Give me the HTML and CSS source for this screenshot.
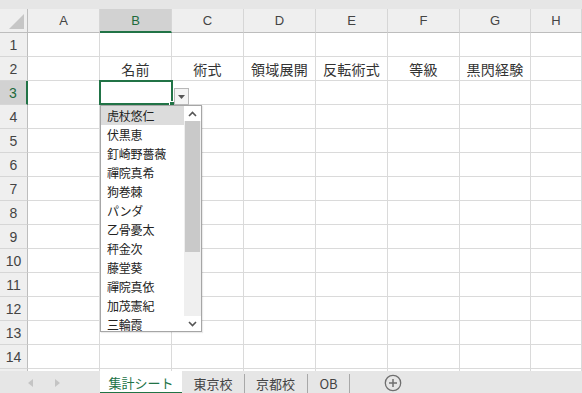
FILE: index.html
```html
<!DOCTYPE html>
<html lang="ja">
<head>
<meta charset="utf-8">
<link rel="stylesheet" href="styles.css">
</head>
<body>
<div class="app">
  <div class="topstrip"></div>
  <div class="sheet">
    <div class="grid">
      <div class="corner"><span class="tri"></span></div>
      <div class="ch">A</div><div class="ch sel">B</div><div class="ch">C</div><div class="ch">D</div><div class="ch">E</div><div class="ch">F</div><div class="ch">G</div><div class="ch">H</div>

      <div class="rh">1</div><div class="c"></div><div class="c"></div><div class="c"></div><div class="c"></div><div class="c"></div><div class="c"></div><div class="c"></div><div class="c"></div>
      <div class="rh">2</div><div class="c"></div><div class="c">名前</div><div class="c">術式</div><div class="c">領域展開</div><div class="c">反転術式</div><div class="c">等級</div><div class="c">黒閃経験</div><div class="c"></div>
      <div class="rh sel">3</div><div class="c"></div><div class="c"></div><div class="c"></div><div class="c"></div><div class="c"></div><div class="c"></div><div class="c"></div><div class="c"></div>
      <div class="rh">4</div><div class="c"></div><div class="c"></div><div class="c"></div><div class="c"></div><div class="c"></div><div class="c"></div><div class="c"></div><div class="c"></div>
      <div class="rh">5</div><div class="c"></div><div class="c"></div><div class="c"></div><div class="c"></div><div class="c"></div><div class="c"></div><div class="c"></div><div class="c"></div>
      <div class="rh">6</div><div class="c"></div><div class="c"></div><div class="c"></div><div class="c"></div><div class="c"></div><div class="c"></div><div class="c"></div><div class="c"></div>
      <div class="rh">7</div><div class="c"></div><div class="c"></div><div class="c"></div><div class="c"></div><div class="c"></div><div class="c"></div><div class="c"></div><div class="c"></div>
      <div class="rh">8</div><div class="c"></div><div class="c"></div><div class="c"></div><div class="c"></div><div class="c"></div><div class="c"></div><div class="c"></div><div class="c"></div>
      <div class="rh">9</div><div class="c"></div><div class="c"></div><div class="c"></div><div class="c"></div><div class="c"></div><div class="c"></div><div class="c"></div><div class="c"></div>
      <div class="rh">10</div><div class="c"></div><div class="c"></div><div class="c"></div><div class="c"></div><div class="c"></div><div class="c"></div><div class="c"></div><div class="c"></div>
      <div class="rh">11</div><div class="c"></div><div class="c"></div><div class="c"></div><div class="c"></div><div class="c"></div><div class="c"></div><div class="c"></div><div class="c"></div>
      <div class="rh">12</div><div class="c"></div><div class="c"></div><div class="c"></div><div class="c"></div><div class="c"></div><div class="c"></div><div class="c"></div><div class="c"></div>
      <div class="rh">13</div><div class="c"></div><div class="c"></div><div class="c"></div><div class="c"></div><div class="c"></div><div class="c"></div><div class="c"></div><div class="c"></div>
      <div class="rh">14</div><div class="c"></div><div class="c"></div><div class="c"></div><div class="c"></div><div class="c"></div><div class="c"></div><div class="c"></div><div class="c"></div>
      <div class="rh"></div><div class="c"></div><div class="c"></div><div class="c"></div><div class="c"></div><div class="c"></div><div class="c"></div><div class="c"></div><div class="c"></div>
    </div>

    <div class="active-cell"><span class="handle"></span></div>
    <div class="dd-btn"><svg width="7" height="4" viewBox="0 0 7 4"><path d="M0 0H7L3.5 4Z" fill="#555"/></svg></div>

    <div class="dd-list">
      <ul class="items">
        <li class="hl">虎杖悠仁</li>
        <li>伏黒恵</li>
        <li>釘崎野薔薇</li>
        <li>禪院真希</li>
        <li>狗巻棘</li>
        <li>パンダ</li>
        <li>乙骨憂太</li>
        <li>秤金次</li>
        <li>藤堂葵</li>
        <li>禪院真依</li>
        <li>加茂憲紀</li>
        <li>三輪霞</li>
      </ul>
      <div class="scroll">
        <div class="sb-btn"><svg width="9" height="6" viewBox="0 0 9 6"><path d="M1 5L4.5 1.5L8 5" fill="none" stroke="#555" stroke-width="1.6"/></svg></div>
        <div class="track"><div class="thumb"></div></div>
        <div class="sb-btn"><svg width="9" height="6" viewBox="0 0 9 6"><path d="M1 1L4.5 4.5L8 1" fill="none" stroke="#555" stroke-width="1.6"/></svg></div>
      </div>
    </div>
  </div>

  <div class="tabs">
    <div class="nav">
      <svg width="5" height="8" viewBox="0 0 5 8"><path d="M5 0V8L0 4Z" fill="#c4c4c4"/></svg>
      <svg width="5" height="8" viewBox="0 0 5 8"><path d="M0 0V8L5 4Z" fill="#c4c4c4"/></svg>
    </div>
    <div class="tab active">集計シート</div>
    <div class="tab w62">東京校</div>
    <div class="tab w63">京都校</div>
    <div class="tab w43 last">OB</div>
    <div class="add">
      <svg width="18" height="18" viewBox="0 0 18 18"><circle cx="9" cy="9" r="7.7" fill="none" stroke="#6f6f6f" stroke-width="1.3"/><path d="M9 5V13M5 9H13" stroke="#6f6f6f" stroke-width="1.5"/></svg>
    </div>
  </div>
</div>
</body>
</html>
```

FILE: styles.css
```css
* { box-sizing: border-box; }
html, body { margin: 0; padding: 0; }
body {
  width: 582px;
  height: 393px;
  overflow: hidden;
  background: #e6e6e6;
  font-family: "Noto Sans CJK JP", "Noto Sans", sans-serif;
}
.app {
  display: flex;
  flex-direction: column;
  height: 393px;
}
.topstrip {
  height: 9px;
  background: #e6e6e6;
  flex: none;
}
.sheet {
  position: relative;
  height: 362px;
  overflow: hidden;
  flex: none;
  background: #fff;
}
.grid {
  display: grid;
  grid-template-columns: 28px repeat(6, 72px) 71px 51px;
  grid-auto-rows: 24px;
}
.corner {
  position: relative;
  background: #efefef;
  border-right: 1px solid #bdbdbd;
  border-bottom: 1px solid #bdbdbd;
}
.tri {
  position: absolute;
  right: 3px;
  bottom: 3px;
  width: 0;
  height: 0;
  border-left: 15px solid transparent;
  border-bottom: 15px solid #c6c6c6;
}
.ch {
  background: #efefef;
  border-right: 1px solid #d6d6d6;
  border-bottom: 1px solid #bdbdbd;
  font-family: "Liberation Sans", "Noto Sans", sans-serif;
  font-size: 13px;
  color: #444;
  display: flex;
  align-items: center;
  justify-content: center;
}
.ch.sel {
  background: #d2d2d2;
  color: #1e6b3c;
  border-bottom: 2px solid #217346;
}
.rh {
  background: #efefef;
  border-right: 1px solid #bdbdbd;
  border-bottom: 1px solid #d6d6d6;
  font-family: "Liberation Sans", "Noto Sans", sans-serif;
  font-size: 14px;
  color: #444;
  display: flex;
  align-items: center;
  justify-content: center;
}
.rh.sel {
  background: #d2d2d2;
  color: #1e6b3c;
  border-right: 2px solid #217346;
}
.c {
  border-right: 1px solid #dadada;
  border-bottom: 1px solid #dadada;
  font-size: 14px;
  color: #333;
  display: flex;
  align-items: center;
  justify-content: center;
  white-space: nowrap;
  letter-spacing: 0.3px;
}
.active-cell {
  position: absolute;
  left: 99px;
  top: 71px;
  width: 74px;
  height: 25px;
  border: 2px solid #217346;
}
.handle {
  position: absolute;
  right: -4px;
  bottom: -4px;
  width: 6px;
  height: 6px;
  background: #217346;
  border: 1px solid #fff;
}
.dd-btn {
  position: absolute;
  left: 174px;
  top: 79px;
  width: 15px;
  height: 17px;
  background: #f4f4f4;
  border: 1px solid #b8b8b8;
  display: flex;
  align-items: center;
  justify-content: center;
}
.dd-list {
  position: absolute;
  left: 100px;
  top: 96px;
  width: 102px;
  height: 227px;
  background: #fff;
  border: 1px solid #a6a6a6;
  display: flex;
  box-shadow: 1px 1px 1px rgba(0,0,0,0.08);
}
.items {
  list-style: none;
  margin: 0;
  padding: 0;
  flex: 1;
}
.items li {
  height: 19px;
  line-height: 19px;
  padding-left: 6px;
  font-size: 12px;
  color: #222;
  white-space: nowrap;
  letter-spacing: -0.2px;
}
.items li.hl {
  background: #dcdcdc;
}
.scroll {
  width: 17px;
  background: #efefef;
  display: flex;
  flex-direction: column;
}
.sb-btn {
  height: 15px;
  display: flex;
  align-items: center;
  justify-content: center;
  background: #fff;
}
.track {
  flex: 1;
  padding: 0 1px;
}
.thumb {
  height: 131px;
  background: #c9c9c9;
}
.tabs {
  flex: 1;
  display: flex;
  align-items: stretch;
  background: #e6e6e6;
  font-size: 13px;
  color: #444;
}
.nav {
  width: 100px;
  flex: none;
  display: flex;
  align-items: center;
  padding-left: 28px;
  gap: 22px;
}
.tab {
  flex: none;
  display: flex;
  align-items: center;
  justify-content: center;
  position: relative;
  white-space: nowrap;
}
.w62 { width: 62px; }
.w63 { width: 63px; }
.w43 { width: 43px; }
.tab + .tab::before {
  content: "";
  position: absolute;
  left: 0;
  top: 3px;
  bottom: 2px;
  width: 1px;
  background: #a8a8a8;
}
.tab.last::after {
  content: "";
  position: absolute;
  right: 0;
  top: 3px;
  bottom: 2px;
  width: 1px;
  background: #a8a8a8;
}
.tab.active {
  width: 82px;
  background: #fff;
  color: #217346;
  border-bottom: 3px solid #217346;
  padding-top: 2px;
}
.tab.active + .tab::before { display: none; }
.add {
  display: flex;
  align-items: center;
  padding-left: 34px;
}
```
